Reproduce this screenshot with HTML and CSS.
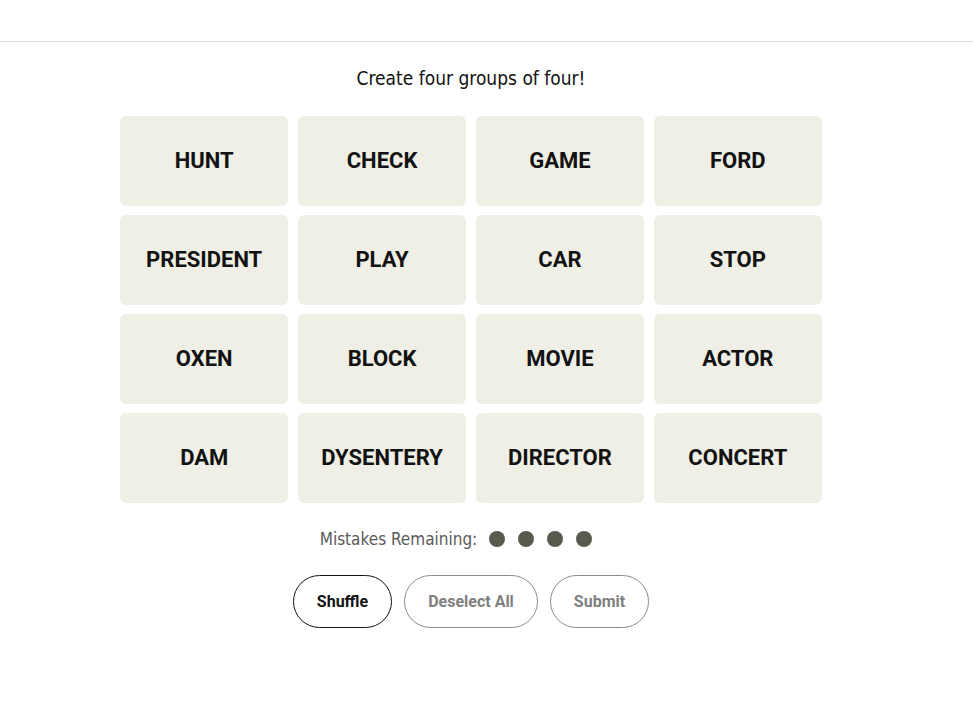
FILE: index.html
```html
<!DOCTYPE html>
<html lang="en">
<head>
  <meta charset="UTF-8">
  <meta name="viewport" content="width=device-width, initial-scale=1.0">
  <title>Connections</title>
  <link rel="stylesheet" href="styles.css">
</head>
<body>
  <!-- Top bar -->
  <header class="top-bar"></header>

  <main class="game">
    <p class="prompt">Create four groups of four!</p>

    <!-- Word board -->
    <div class="board">
      <button class="tile">HUNT</button>
      <button class="tile">CHECK</button>
      <button class="tile">GAME</button>
      <button class="tile">FORD</button>
      <button class="tile">PRESIDENT</button>
      <button class="tile">PLAY</button>
      <button class="tile">CAR</button>
      <button class="tile">STOP</button>
      <button class="tile">OXEN</button>
      <button class="tile">BLOCK</button>
      <button class="tile">MOVIE</button>
      <button class="tile">ACTOR</button>
      <button class="tile">DAM</button>
      <button class="tile">DYSENTERY</button>
      <button class="tile">DIRECTOR</button>
      <button class="tile">CONCERT</button>
    </div>

    <div class="mistakes">
      <span>Mistakes Remaining:</span>
      <span class="dots">
        <span class="dot"></span>
        <span class="dot"></span>
        <span class="dot"></span>
        <span class="dot"></span>
      </span>
    </div>

    <div class="controls">
      <button class="pill pill-active">Shuffle</button>
      <button class="pill">Deselect All</button>
      <button class="pill">Submit</button>
    </div>
  </main>
</body>
</html>
```

FILE: styles.css
```css
/* Reset default styles */
* {
  margin: 0;
  padding: 0;
  box-sizing: border-box;
}

body {
  background: #fff;
  font-family: "Liberation Sans Narrow", "DejaVu Sans Condensed", "Liberation Sans", sans-serif;
  color: #121212;
}

.top-bar {
  height: 42px;
  border-bottom: 1px solid #dcdcdc;
}

/* Game area */
.game {
  display: flex;
  flex-direction: column;
  align-items: center;
  padding-right: 31px;
}

.prompt {
  margin-top: 23px;
  font-size: 19px;
  line-height: 26px;
}

/* Board */
.board {
  margin-top: 25px;
  width: 702px;
  display: grid;
  grid-template-columns: repeat(4, 1fr);
  grid-auto-rows: 89.5px;
  gap: 9.5px;
}

.tile {
  background: #efefe6;
  border: none;
  border-radius: 6px;
  font-family: Roboto, "Liberation Sans", sans-serif;
  font-weight: 700;
  font-size: 22px;
  color: #121212;
  cursor: pointer;
}

/* Mistakes counter */
.mistakes {
  margin-top: 26px;
  padding-right: 30px;
  display: flex;
  align-items: center;
  gap: 12px;
  font-size: 17px;
  color: #5a5a5a;
}

.dots {
  display: flex;
  gap: 13px;
}

.dot {
  width: 16px;
  height: 16px;
  border-radius: 50%;
  background: #5a594e;
}

/* Buttons */
.controls {
  margin-top: 26px;
  display: flex;
  gap: 12px;
}

.pill {
  height: 53px;
  padding: 0 23px;
  border: 1px solid #8c8c8c;
  border-radius: 32px;
  background: #fff;
  font-family: Roboto, "Liberation Sans", sans-serif;
  font-weight: 700;
  font-size: 16px;
  color: #7f7f7f;
  cursor: pointer;
}

.pill-active {
  border-color: #121212;
  color: #121212;
}
```
